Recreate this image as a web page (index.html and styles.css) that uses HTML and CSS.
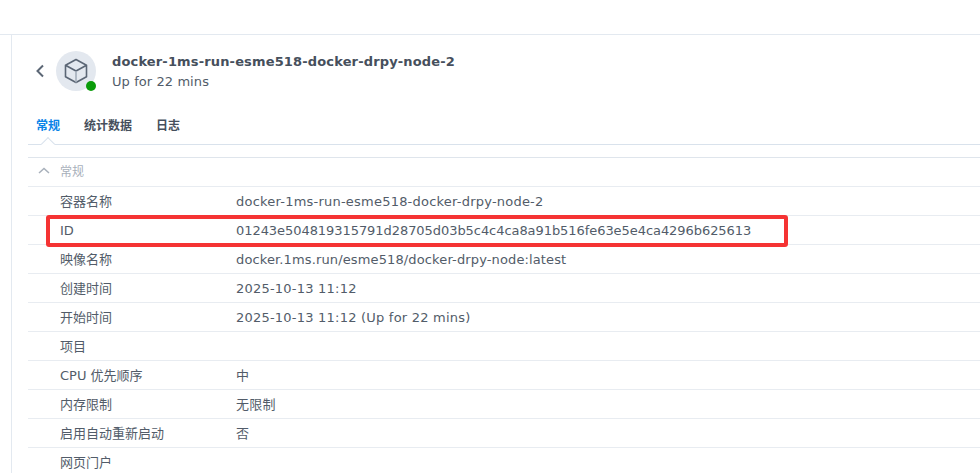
FILE: index.html
```html
<!DOCTYPE html>
<html lang="en">

<head>
  <meta charset="UTF-8" />
  <title>docker-1ms-run-esme518-docker-drpy-node-2</title>
  <link rel="stylesheet" href="styles.css">
</head>

<body>
  <div class="topbar"></div>

  <div class="main">
    <div class="panel">
      <div class="head">
        <svg class="back" width="10" height="14" viewBox="0 0 10 14">
          <path d="M8 1.5 L2.5 7 L8 12.5" fill="none" stroke="#5b6675" stroke-width="2" />
        </svg>
        <div class="avatar">
          <svg width="24" height="26" viewBox="0 0 24 26">
            <path d="M12 1.5 L22.5 7.2 V18.8 L12 24.5 L1.5 18.8 V7.2 Z M1.5 7.2 L12 13 L22.5 7.2" fill="none" stroke="#5b6675" stroke-width="1.6" stroke-linejoin="round" />
            <path d="M12 13 V24.5" fill="none" stroke="#a3adba" stroke-width="1.6" />
          </svg>
          <span class="status"></span>
        </div>
        <div class="title">
          <div class="name">docker-1ms-run-esme518-docker-drpy-node-2</div>
          <div class="uptime">Up for 22 mins</div>
        </div>
      </div>

      <div class="tabs">
        <span class="tab active">常规</span>
        <span class="tab">统计数据</span>
        <span class="tab">日志</span>
      </div>

      <div class="section">
        <div class="section-head">
          <svg width="12" height="7" viewBox="0 0 12 7">
            <path d="M1 6 L6 1.5 L11 6" fill="none" stroke="#a8b0bb" stroke-width="1.5" />
          </svg>
          <span>常规</span>
        </div>
        <div class="row"><span class="label">容器名称</span><span>docker-1ms-run-esme518-docker-drpy-node-2</span></div>
        <div class="row"><span class="label">ID</span><span class="hash">01243e504819315791d28705d03b5c4c4ca8a91b516fe63e5e4ca4296b625613</span></div>
        <div class="row"><span class="label">映像名称</span><span class="image">docker.1ms.run/esme518/docker-drpy-node:latest</span></div>
        <div class="row"><span class="label">创建时间</span><span>2025-10-13 11:12</span></div>
        <div class="row"><span class="label">开始时间</span><span>2025-10-13 11:12 (Up for 22 mins)</span></div>
        <div class="row"><span class="label">项目</span><span></span></div>
        <div class="row"><span class="label">CPU 优先顺序</span><span>中</span></div>
        <div class="row"><span class="label">内存限制</span><span>无限制</span></div>
        <div class="row"><span class="label">启用自动重新启动</span><span>否</span></div>
        <div class="row"><span class="label">网页门户</span><span></span></div>
        <div class="highlight"></div>
      </div>
    </div>
  </div>
</body>

</html>
```

FILE: styles.css
```css
body {
  margin: 0;
  height: 473px;
  overflow: hidden;
  background: #fff;
  color: #525c69;
  font-family: "DejaVu Sans", "Noto Sans CJK SC", sans-serif;
  font-size: 13px;
}

.topbar {
  height: 34px;
  border-bottom: 1px solid #e3e9f0;
}

.main {
  margin-left: 11px;
  border-left: 1px solid #e3e9f0;
  height: 438px;
}

.panel {
  padding-left: 16px;
}

.head {
  display: flex;
  align-items: center;
  height: 72px;
}

.back {
  margin-left: 7px;
  margin-right: 11px;
}

.avatar {
  position: relative;
  width: 40px;
  height: 40px;
  border-radius: 50%;
  background: #e3e8ef;
  display: flex;
  align-items: center;
  justify-content: center;
}

.status {
  position: absolute;
  right: 0;
  bottom: 0;
  width: 10px;
  height: 10px;
  border-radius: 50%;
  background: #0a9c0a;
}

.title {
  margin-left: 16px;
  padding-top: 2px;
  line-height: 20px;
}

.name {
  font-weight: bold;
  color: #464f5c;
  letter-spacing: 0.15px;
}

.uptime {
  letter-spacing: 0.08px;
}

.tabs {
  display: flex;
  gap: 24px;
  height: 38px;
  padding-left: 8px;
  box-sizing: border-box;
  padding-top: 9px;
  border-bottom: 1px solid #d9e2ec;
  font-size: 12px;
  font-weight: bold;
  color: #464f5c;
}

.tab.active {
  color: #0a84e8;
  position: relative;
}

/* notch under the selected tab */
.tab.active::after {
  content: "";
  position: absolute;
  left: 7px;
  bottom: -5px;
  width: 9px;
  height: 9px;
  background: #fff;
  border-left: 1px solid #d9e2ec;
  border-top: 1px solid #d9e2ec;
  transform: rotate(45deg);
}

.section {
  position: relative;
  margin-top: 12px;
  border-top: 1px solid #dfe5ec;
}

.section-head {
  display: flex;
  align-items: center;
  gap: 10px;
  height: 29px;
  box-sizing: border-box;
  padding-left: 10px;
  padding-bottom: 3px;
  font-size: 12px;
  color: #a8b0bb;
  border-bottom: 1px solid #e8ecf1;
}

.row {
  display: flex;
  height: 29px;
  box-sizing: border-box;
  padding-top: 1px;
  line-height: 28px;
  border-bottom: 1px solid #e8ecf1;
  letter-spacing: 0.22px;
}

.label {
  width: 176px;
  margin-left: 32px;
  flex-shrink: 0;
  letter-spacing: 0;
}

.hash {
  letter-spacing: -0.06px;
}

.image {
  letter-spacing: 0.13px;
}

.highlight {
  position: absolute;
  left: 18px;
  top: 57px;
  width: 734px;
  height: 24px;
  border: 4px solid #f53333;
  border-radius: 3px;
}
```
